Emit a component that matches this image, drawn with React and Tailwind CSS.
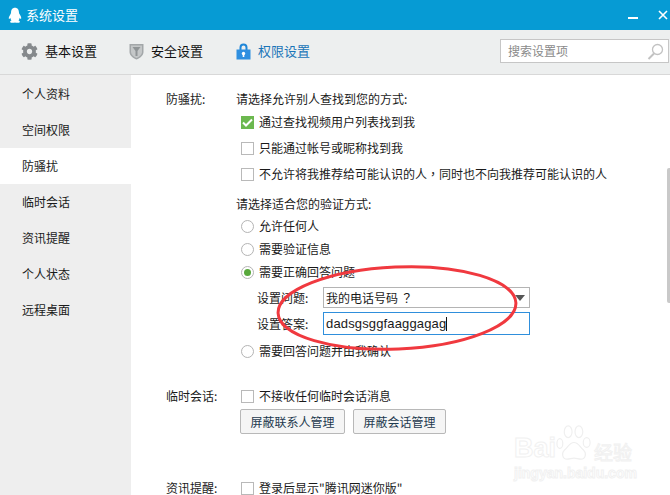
import React from 'react';
import { FaCog } from 'react-icons/fa';

const font = { fontFamily: '"Noto Sans CJK SC", "Liberation Sans", sans-serif' };
const latin = { fontFamily: '"Liberation Sans", sans-serif' };
const centeredPunct = { fontFamily: '"Noto Sans CJK TC", sans-serif' };

const sideItems = ['个人资料', '空间权限', '防骚扰', '临时会话', '资讯提醒', '个人状态', '远程桌面'];

const Penguin = () => (
  <svg width="14" height="17" viewBox="0 0 16 18" fill="#fff">
    <path d="M8 0C4.8 0 3.5 2.6 3.5 5.2c0 1-.3 1.7-1 2.8C1.3 9.8.6 11.5 1 12.6c.4.8 1.2-.2 1.6-.9.2 1.2.7 2.2 1.4 2.9-1.2.5-1.8 1.1-1.6 1.8.3.8 2 1.1 3.4.9.9-.1 1.500-.4 2.200-.4s1.300.3 2.200.4c1.400.2 3.100-.1 3.400-.9.200-.7-.4-1.300-1.600-1.800.7-.7 1.200-1.700 1.400-2.900.4.700 1.200 1.700 1.600.9.400-1.100-.3-2.800-1.500-4.600-.7-1.100-1-1.800-1-2.800C12.500 2.600 11.200 0 8 0z" />
  </svg>
);

const Shield = () => (
  <svg width="15" height="17" viewBox="0 0 15 17">
    <path d="M0.500 1h14v8c0 3.500-3.500 6-7 7.500C4 15 .5 12.500.5 9z" fill="#a3a7a9" />
    <path d="M2 2.500h11V9c0 2.600-2.700 4.700-5.500 6C4.700 13.700 2 11.600 2 9z" fill="#c4c7c8" />
    <path d="M3.500 4h8L8.500 8v5h-2V8z" fill="#8f9496" />
  </svg>
);

const Lock = () => (
  <svg width="15" height="17" viewBox="0 0 15 17">
    <path d="M3.500 8V4.500a4 4 0 0 1 8 0V8h-2V4.500a2 2 0 0 0-4 0V8z" fill="#1f86d8" />
    <rect x="0.500" y="6.500" width="14" height="10" fill="#2f8fe0" />
    <circle cx="7.500" cy="10.500" r="1.700" fill="#fff" />
    <rect x="6.700" y="11" width="1.600" height="3" fill="#fff" />
  </svg>
);

const Checkbox = ({ checked }) => (
  checked ? (
    <span className="w-[13px] h-[13px] bg-[#6cb84f] flex items-center justify-center shrink-0">
      <svg width="11" height="9" viewBox="0 0 11 9" fill="none">
        <path d="M1 4.500L4 7.500L10 1.500" stroke="#fff" strokeWidth="2" />
      </svg>
    </span>
  ) : (
    <span className="w-[13px] h-[13px] bg-white border border-[#b9b9b9] shrink-0" />
  )
);

const Radio = ({ checked }) => (
  <span className="w-[13px] h-[13px] rounded-full bg-white border border-[#b4b4b4] flex items-center justify-center shrink-0">
    {checked && <span className="w-[7px] h-[7px] rounded-full bg-[#58a83c]" />}
  </span>
);

const CheckRow = ({ checked, children, className = '' }) => (
  <div className={`flex items-center gap-[5px] pl-[5px] h-[14px] ${className}`}>
    <Checkbox checked={checked} />
    <span>{children}</span>
  </div>
);

const RadioRow = ({ checked, children, className = '' }) => (
  <div className={`flex items-center gap-[5px] pl-[5px] h-[14px] ${className}`}>
    <Radio checked={checked} />
    <span>{children}</span>
  </div>
);

const Tab = ({ icon, label, active }) => (
  <div className={`flex items-center gap-[7px] ${active ? 'text-[#1a75b8]' : 'text-[#111]'}`}>
    {icon}
    <span className="text-[13px] leading-none pb-[1px]">{label}</span>
  </div>
);

const Btn = ({ children, className = '' }) => (
  <button className={`h-[25px] bg-[#f5f5f5] border border-[#b8b8b8] rounded-[2px] text-[12px] text-[#1e3a4f] leading-none ${className}`}>
    {children}
  </button>
);

export default function App() {
  return (
    <div className="relative w-[670px] h-[495px] overflow-hidden bg-white text-[12px] text-[#1a1a1a]" style={font}>
      {/* title bar */}
      <div className="h-[30px] bg-[#069bd4] flex items-center pl-[8px] pr-[2px] text-white">
        <Penguin />
        <span className="ml-[4px] text-[13px] leading-none pb-[2px]">系统设置</span>
        <div className="ml-auto flex items-center gap-[20px]">
          <span className="w-[10px] h-[2px] bg-white mt-[6px]" />
          <svg width="10" height="10" viewBox="0 0 10 10" stroke="#fff" strokeWidth="1.600">
            <path d="M1 1l8 8M9 1l-8 8" />
          </svg>
        </div>
      </div>

      {/* toolbar */}
      <div className="h-[45px] bg-[#edefef] border-b border-[#d8d8d8] flex items-center pl-[21px] pr-[1px] pb-[2px]">
        <Tab icon={<FaCog className="w-[17px] h-[17px] text-[#85898c]" />} label="基本设置" />
        <div className="ml-[32px]">
          <Tab icon={<Shield />} label="安全设置" />
        </div>
        <div className="ml-[33px]">
          <Tab icon={<Lock />} label="权限设置" active />
        </div>
        <div className="ml-auto w-[169px] h-[24px] bg-white border border-[#c6c6c6] flex items-center pl-[7px] pr-[4px] text-[#8a8a8a]">
          <span className="leading-none">搜索设置项</span>
          <svg className="ml-auto" width="17" height="17" viewBox="0 0 17 17" fill="none" stroke="#c2c2c2">
            <circle cx="10.500" cy="6.500" r="5" strokeWidth="1.300" />
            <path d="M7 10.500L1.500 16" strokeWidth="2" />
          </svg>
        </div>
      </div>

      <div className="flex h-[420px]">
        {/* sidebar */}
        <div className="w-[131px] bg-[#eeeeee] pt-[1px] shrink-0">
          {sideItems.map((item) => (
            <div
              key={item}
              className={`h-[36px] flex items-center pl-[22px] pb-[1px] ${item === '防骚扰' ? 'bg-white' : ''}`}
            >
              {item}
            </div>
          ))}
        </div>

        {/* content */}
        <div className="pl-[35px] pt-[17px] leading-[14px]">
          <div className="flex">
            <div className="w-[70px] shrink-0">防骚扰:</div>
            <div>
              <div>请选择允许别人查找到您的方式:</div>
              <CheckRow checked className="mt-[9px]">通过查找视频用户列表找到我</CheckRow>
              <CheckRow className="mt-[12px]">只能通过帐号或昵称找到我</CheckRow>
              <CheckRow className="mt-[12px]">
                不允许将我推荐给可能认识的人<span style={centeredPunct}>，</span>同时也不向我推荐可能认识的人
              </CheckRow>
              <div className="mt-[16px]">请选择适合您的验证方式:</div>
              <RadioRow className="mt-[8px]">允许任何人</RadioRow>
              <RadioRow className="mt-[9px]">需要验证信息</RadioRow>
              <RadioRow checked className="mt-[9px]">需要正确回答问题</RadioRow>
              <div className="mt-[8px] pl-[21px] flex items-center">
                <span className="w-[66px]">设置问题:</span>
                <div className="w-[207px] h-[21px] bg-white border border-[#b4b4b4] flex items-center pl-[2px] pr-[4px]">
                  <span>我的电话号码 <span style={centeredPunct}>？</span></span>
                  <span className="ml-auto w-0 h-0 border-l-[5px] border-r-[5px] border-t-[6px] border-l-transparent border-r-transparent border-t-[#555]" />
                </div>
              </div>
              <div className="mt-[4px] pl-[21px] flex items-center">
                <span className="w-[66px]">设置答案:</span>
                <div className="w-[207px] h-[23px] bg-white border border-[#2f8fdc] flex items-center pl-[2px]">
                  <span className="text-[13px] tracking-[0.15px]" style={latin}>dadsgsggfaaggagag</span>
                  <span className="w-px h-[14px] bg-[#111]" />
                </div>
              </div>
              <RadioRow className="mt-[9px]">需要回答问题并由我确认</RadioRow>
            </div>
          </div>

          <div className="flex mt-[31px]">
            <div className="w-[70px] shrink-0">临时会话:</div>
            <div>
              <CheckRow>不接收任何临时会话消息</CheckRow>
              <div className="flex gap-[8px] mt-[6px] pl-[4px]">
                <Btn className="w-[105px]">屏蔽联系人管理</Btn>
                <Btn className="w-[93px]">屏蔽会话管理</Btn>
              </div>
            </div>
          </div>

          <div className="flex mt-[47px]">
            <div className="w-[70px] shrink-0">资讯提醒:</div>
            <CheckRow>登录后显示"腾讯网迷你版"</CheckRow>
          </div>
        </div>
      </div>

      {/* scrollbar thumb */}
      <div className="absolute right-0 top-[168px] w-[3px] h-[135px] bg-[#c9c9c9] rounded-l-[2px]" />

      {/* red annotation */}
      <svg className="absolute left-[270px] top-[258px]" width="256" height="100" viewBox="0 0 256 100" fill="none">
        <ellipse cx="127" cy="50" rx="119" ry="41" transform="rotate(-2.500 127 50)" stroke="#f0393f" strokeWidth="3" />
      </svg>

      {/* watermark */}
      <div className="absolute left-[514px] top-[423px] w-[156px] text-white [-webkit-text-stroke:1px_#f1f1f1]">
        <div className="flex items-end h-[39px]">
          <span className="text-[27px] leading-none font-bold" style={latin}>Bai</span>
          <svg width="36" height="39" viewBox="0 0 36 40" fill="none" stroke="#efefef" strokeWidth="1.200">
            <ellipse cx="3.500" cy="21" rx="3" ry="5" />
            <ellipse cx="12" cy="9" rx="4" ry="6" />
            <ellipse cx="23" cy="9" rx="4" ry="6" />
            <ellipse cx="31" cy="20" rx="3.500" ry="5" />
            <path d="M18 20c-5 0-6 5-10 8-3 3-2 9 3 9 3 0 4-1 7-1s4 1 7 1c5 0 6-6 3-9-4-3-5-8-10-8z" />
          </svg>
          <span className="text-[19px] leading-none ml-[2px] mb-[1px]">经验</span>
        </div>
        <div className="text-[14px] leading-none mt-[4px] font-bold" style={latin}>jingyan.baidu.com</div>
      </div>
    </div>
  );
}
